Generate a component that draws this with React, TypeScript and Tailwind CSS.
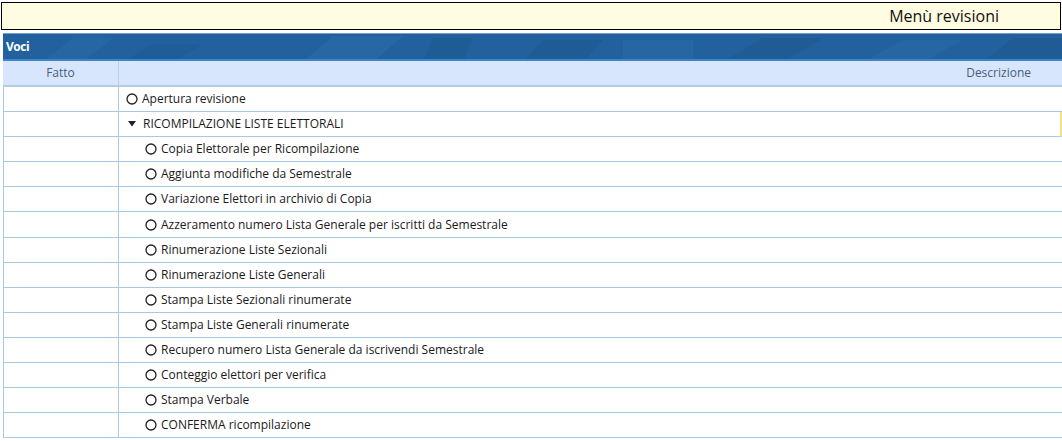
import React from "react";

const font = { fontFamily: '"Open Sans", "Noto Sans", sans-serif' };

type Row = { label: string; level: 1 | 2; group?: boolean };

const rows: Row[] = [
  { label: "Apertura revisione", level: 1 },
  { label: "RICOMPILAZIONE LISTE ELETTORALI", level: 1, group: true },
  { label: "Copia Elettorale per Ricompilazione", level: 2 },
  { label: "Aggiunta modifiche da Semestrale", level: 2 },
  { label: "Variazione Elettori in archivio di Copia", level: 2 },
  { label: "Azzeramento numero Lista Generale per iscritti da Semestrale", level: 2 },
  { label: "Rinumerazione Liste Sezionali", level: 2 },
  { label: "Rinumerazione Liste Generali", level: 2 },
  { label: "Stampa Liste Sezionali rinumerate", level: 2 },
  { label: "Stampa Liste Generali rinumerate", level: 2 },
  { label: "Recupero numero Lista Generale da iscrivendi Semestrale", level: 2 },
  { label: "Conteggio elettori per verifica", level: 2 },
  { label: "Stampa Verbale", level: 2 },
  { label: "CONFERMA ricompilazione", level: 2 },
];

function Circle() {
  return (
    <svg width="12" height="12" viewBox="0 0 12 12" className="shrink-0">
      <circle cx="6" cy="6" r="5" fill="none" stroke="#222" strokeWidth="1.3" />
    </svg>
  );
}

function Tri() {
  return (
    <svg width="8" height="6" viewBox="0 0 8 6" className="shrink-0">
      <polygon points="0,0 8,0 4,5.5" fill="#222" />
    </svg>
  );
}

export default function App() {
  return (
    <div className="w-[1062px] h-[441px] bg-white overflow-hidden" style={font}>
      <div className="pt-[2px] pl-[1px] pr-[1px]">
        <div className="h-[28px] border border-black bg-[#fffde1] flex items-center justify-end pr-[61px]">
          <span className="text-[16px] text-[#111] leading-none">Menù revisioni</span>
        </div>
      </div>
      <div className="mt-[3px] ml-[3px]">
        <div className="relative h-[28px] bg-[#22619d] border-t border-[#6f9cc8] border-b-2 border-b-[#3f86c9] flex items-center pl-[3px] overflow-hidden">
          <svg className="absolute inset-0" width="1060" height="28" viewBox="0 0 1060 28" preserveAspectRatio="none">
            <polygon points="40,28 70,4 110,4 80,28" fill="#2668a5" opacity="0.7" />
            <polygon points="120,28 150,10 200,10 170,28" fill="#1d5a94" opacity="0.6" />
            <polygon points="300,28 330,2 400,2 370,28" fill="#2a6ba8" opacity="0.6" />
            <polygon points="420,28 430,4 470,4 460,28" fill="#1c5890" opacity="0.6" />
            <polygon points="520,28 540,6 600,6 580,28" fill="#1c5890" opacity="0.5" />
            <rect x="620" y="6" width="70" height="22" fill="#2a6ba8" opacity="0.5" />
            <polygon points="720,28 760,4 820,4 780,28" fill="#1c5890" opacity="0.5" />
            <polygon points="860,28 900,6 960,6 920,28" fill="#2a6ba8" opacity="0.5" />
            <polygon points="980,28 1010,4 1060,4 1060,28" fill="#1c5890" opacity="0.5" />
          </svg>
          <span className="relative text-white font-bold text-[12px] tracking-[-0.5px]">Voci</span>
        </div>
        <div className="flex h-[26px] bg-[#d8e6fd] border-b-2 border-[#b3cde6] text-[12px] text-[#4a5d7e]">
          <div className="w-[116px] flex items-center justify-center border-r border-[#b9d0e6]">Fatto</div>
          <div className="flex-1 flex items-center justify-end pr-[31px]">Descrizione</div>
        </div>
        {rows.map((r, i) => (
          <div
            key={i}
            className={
              "flex h-[25.1px] border-b border-[#a9c9e2] border-l border-l-[#a9c9e2] text-[12px] text-[#1a1a1a] " +
              (r.group ? "border-r-2 border-r-[#f3e08a]" : "")
            }
          >
            <div className="w-[115px] border-r border-[#a9c9e2]" />
            <div
              className={
                "flex-1 flex items-center gap-[4px] " + (r.level === 1 ? "pl-[7px]" : "pl-[26px]")
              }
            >
              {r.group ? (
                <span className="w-[12px] flex justify-center mr-[1px]">
                  <Tri />
                </span>
              ) : (
                <Circle />
              )}
              <span className={r.group ? "font-medium" : ""}>{r.label}</span>
            </div>
          </div>
        ))}
      </div>
    </div>
  );
}
